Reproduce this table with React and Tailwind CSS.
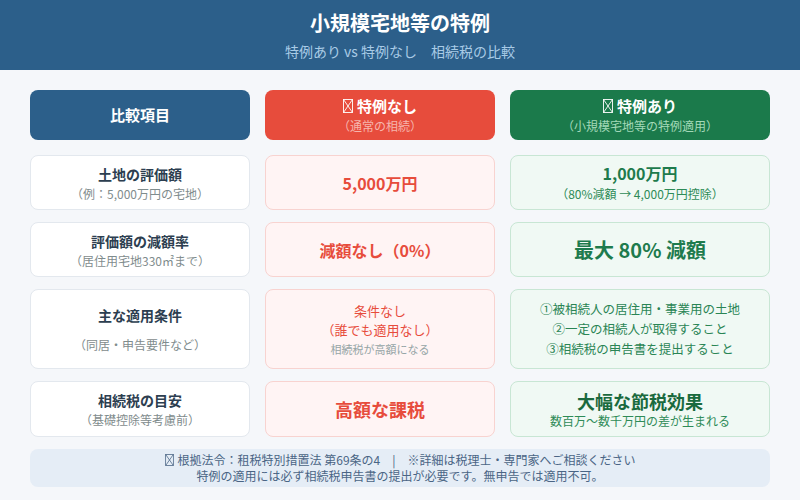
import React from "react";

const Tofu = ({ className = "" }) => (
  <svg
    viewBox="0 0 10 14"
    className={`inline-block align-[-2px] ${className}`}
    fill="none"
    stroke="currentColor"
    strokeWidth="0.9"
  >
    <rect x="0.5" y="0.5" width="9" height="13" />
    <path d="M0.5 0.5 L9.5 13.5 M9.5 0.5 L0.5 13.5" />
  </svg>
);

const LabelCell = ({ title, sub, tall }) => (
  <div className="bg-white border-[1.5px] border-[#e3e8ee] rounded-lg flex flex-col items-center justify-center">
    <div className="text-[14px] font-bold text-[#2c3e50] leading-5">{title}</div>
    <div className={`text-[12px] text-[#7f8c8d] leading-4 ${tall ? "mt-3" : "mt-[2px]"}`}>{sub}</div>
  </div>
);

const RedCell = ({ children }) => (
  <div className="bg-[#fff4f4] border-[1.5px] border-[#f8d3d0] rounded-lg flex flex-col items-center justify-center text-[#e74c3c]">
    {children}
  </div>
);

const GreenCell = ({ children }) => (
  <div className="bg-[#f0f9f4] border-[1.5px] border-[#c8e6d4] rounded-lg flex flex-col items-center justify-center text-[#1e7b4d]">
    {children}
  </div>
);

export default function App() {
  const row = "grid grid-cols-[220px_230px_260px] gap-x-[15px]";

  return (
    <div
      className="w-[800px] h-[500px] bg-[#f5f7fa] overflow-hidden"
      style={{ fontFamily: '"Noto Sans CJK JP", "Noto Sans", sans-serif' }}
    >
      <div className="h-[70px] bg-[#2c5f8a] flex flex-col items-center justify-center">
        <h1 className="text-[20px] font-bold text-white leading-7">小規模宅地等の特例</h1>
        <p className="text-[14px] text-[#a9cbe6] leading-5 mt-[4px]">特例あり vs 特例なし　相続税の比較</p>
      </div>

      <div className="px-[30px] pt-[20px] flex flex-col gap-[12px]">
        <div className={`${row} h-[50px] mb-[3px]`}>
          <div className="bg-[#2c5f8a] rounded-lg flex items-center justify-center text-white text-[15px] font-bold">
            比較項目
          </div>
          <div className="bg-[#e74c3c] rounded-lg flex flex-col items-center justify-center">
            <div className="text-white text-[15px] font-bold leading-5 flex items-center gap-1">
              <Tofu className="w-[10px] h-[14px]" />
              特例なし
            </div>
            <div className="text-[12px] text-[#f6b5ad] leading-4 mt-[2px]">（通常の相続）</div>
          </div>
          <div className="bg-[#1b7a4b] rounded-lg flex flex-col items-center justify-center">
            <div className="text-white text-[15px] font-bold leading-5 flex items-center gap-1">
              <Tofu className="w-[10px] h-[14px]" />
              特例あり
            </div>
            <div className="text-[12px] text-[#a3d9b8] leading-4 mt-[2px]">（小規模宅地等の特例適用）</div>
          </div>
        </div>

        <div className={`${row} h-[55px]`}>
          <LabelCell title="土地の評価額" sub="（例：5,000万円の宅地）" />
          <RedCell>
            <div className="text-[16px] font-bold">5,000万円</div>
          </RedCell>
          <GreenCell>
            <div className="text-[16px] font-bold leading-5">1,000万円</div>
            <div className="text-[12px] text-[#2e8b57] leading-4 mt-[3px]">（80%減額 → 4,000万円控除）</div>
          </GreenCell>
        </div>

        <div className={`${row} h-[55px]`}>
          <LabelCell title="評価額の減額率" sub="（居住用宅地330㎡まで）" />
          <RedCell>
            <div className="text-[16px] font-bold">減額なし（0%）</div>
          </RedCell>
          <GreenCell>
            <div className="text-[20px] font-bold">最大 80% 減額</div>
          </GreenCell>
        </div>

        <div className={`${row} h-[80px]`}>
          <LabelCell title="主な適用条件" sub="（同居・申告要件など）" tall />
          <RedCell>
            <div className="text-[13px] leading-[19px]">条件なし</div>
            <div className="text-[13px] leading-[19px]">（誰でも適用なし）</div>
            <div className="text-[11px] text-[#95a5a6] leading-4 mt-[2px]">相続税が高額になる</div>
          </RedCell>
          <GreenCell>
            <div className="text-[12.5px] leading-[20px] text-[#2a8555] text-center">
              <div>①被相続人の居住用・事業用の土地</div>
              <div>②一定の相続人が取得すること</div>
              <div>③相続税の申告書を提出すること</div>
            </div>
          </GreenCell>
        </div>

        <div className={`${row} h-[56px]`}>
          <LabelCell title="相続税の目安" sub="（基礎控除等考慮前）" />
          <RedCell>
            <div className="text-[18px] font-bold">高額な課税</div>
          </RedCell>
          <GreenCell>
            <div className="text-[18px] font-bold text-[#1a6a3e] leading-6">大幅な節税効果</div>
            <div className="text-[12px] text-[#2e8b57] leading-4">数百万〜数千万円の差が生まれる</div>
          </GreenCell>
        </div>

        <div className="h-[38px] bg-[#e5edf6] rounded-lg flex flex-col items-center justify-center text-[12px] text-[#4a6585] leading-[16px]">
          <div className="flex items-center gap-1">
            <Tofu className="w-[9px] h-[12px]" />
            <span>根拠法令：租税特別措置法 第69条の4　|　※詳細は税理士・専門家へご相談ください</span>
          </div>
          <div>特例の適用には必ず相続税申告書の提出が必要です。無申告では適用不可。</div>
        </div>
      </div>
    </div>
  );
}
